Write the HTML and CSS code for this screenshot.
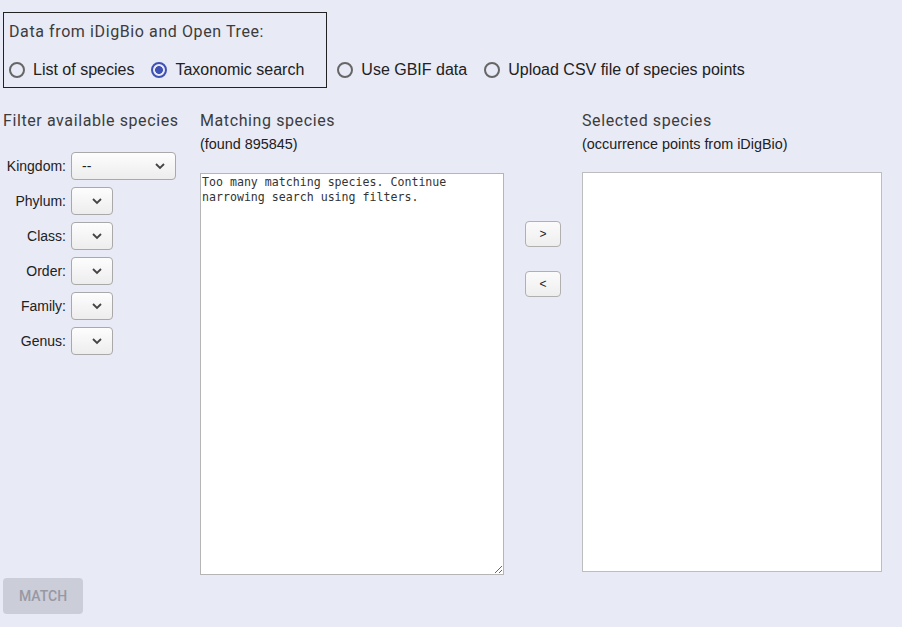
FILE: index.html
```html
<!DOCTYPE html>
<html>
<head>
<meta charset="utf-8">
<link rel="stylesheet" href="styles.css">
</head>
<body>
<div class="top">
  <div class="source-box">
    <div class="box-title">Data from iDigBio and Open Tree:</div>
    <div class="radio-row">
      <label class="radio"><input type="radio" name="src"><span>List of species</span></label>
      <label class="radio"><input type="radio" name="src" checked><span>Taxonomic search</span></label>
    </div>
  </div>
  <div class="radio-row outside">
    <label class="radio"><input type="radio" name="src"><span>Use GBIF data</span></label>
    <label class="radio"><input type="radio" name="src"><span>Upload CSV file of species points</span></label>
  </div>
</div>

<div class="main">
  <div class="col filters">
    <div class="heading">Filter available species</div>
    <div class="filter-list">
      <div class="filter-row"><span class="flabel">Kingdom:</span><span class="sel wide"><span class="sel-text">--</span><svg class="chev" width="12" height="8" viewBox="0 0 12 8"><path d="M2 2 L6 6 L10 2" fill="none" stroke="#444" stroke-width="1.8"/></svg></span></div>
      <div class="filter-row"><span class="flabel">Phylum:</span><span class="sel"><svg class="chev" width="12" height="8" viewBox="0 0 12 8"><path d="M2 2 L6 6 L10 2" fill="none" stroke="#444" stroke-width="1.8"/></svg></span></div>
      <div class="filter-row"><span class="flabel">Class:</span><span class="sel"><svg class="chev" width="12" height="8" viewBox="0 0 12 8"><path d="M2 2 L6 6 L10 2" fill="none" stroke="#444" stroke-width="1.8"/></svg></span></div>
      <div class="filter-row"><span class="flabel">Order:</span><span class="sel"><svg class="chev" width="12" height="8" viewBox="0 0 12 8"><path d="M2 2 L6 6 L10 2" fill="none" stroke="#444" stroke-width="1.8"/></svg></span></div>
      <div class="filter-row"><span class="flabel">Family:</span><span class="sel"><svg class="chev" width="12" height="8" viewBox="0 0 12 8"><path d="M2 2 L6 6 L10 2" fill="none" stroke="#444" stroke-width="1.8"/></svg></span></div>
      <div class="filter-row"><span class="flabel">Genus:</span><span class="sel"><svg class="chev" width="12" height="8" viewBox="0 0 12 8"><path d="M2 2 L6 6 L10 2" fill="none" stroke="#444" stroke-width="1.8"/></svg></span></div>
    </div>
  </div>

  <div class="col matching">
    <div class="heading">Matching species</div>
    <div class="sub">(found 895845)</div>
    <textarea class="match-area">Too many matching species. Continue narrowing search using filters.</textarea>
  </div>

  <div class="col middle">
    <button class="move">&gt;</button>
    <button class="move">&lt;</button>
  </div>

  <div class="col selected">
    <div class="heading">Selected species</div>
    <div class="sub">(occurrence points from iDigBio)</div>
    <div class="sel-area"></div>
  </div>
</div>

<button class="match-btn" disabled>MATCH</button>
</body>
</html>
```

FILE: styles.css
```css
html, body {
  margin: 0;
  padding: 0;
  background: #e8eaf6;
  width: 902px;
  height: 627px;
  overflow: hidden;
  font-family: "Liberation Sans", Arial, sans-serif;
  color: #212121;
}

.top {
  display: flex;
  align-items: flex-end;
  padding: 12px 0 0 3px;
}

.source-box {
  border: 1px solid #222;
  padding: 9px 5px 5px 5px;
}

.box-title {
  font-family: Roboto, sans-serif;
  font-size: 16px;
  letter-spacing: 0.6px;
  line-height: 20px;
  color: #3c3c3c;
  margin-bottom: 16px;
}

.radio-row {
  display: flex;
  align-items: center;
  height: 24px;
}

.outside {
  margin-left: 10px;
  margin-bottom: 6px;
}

.radio {
  display: flex;
  align-items: center;
  font-size: 16px;
  margin-right: 17px;
}

.radio input {
  appearance: none;
  -webkit-appearance: none;
  width: 16px;
  height: 16px;
  margin: 0 8px 0 0;
  border: 2px solid #666;
  border-radius: 50%;
  background: transparent;
}

.radio input:checked {
  border-color: #3f51b5;
  background: radial-gradient(circle, #3f51b5 0 3.6px, transparent 4.2px);
}

.main {
  display: flex;
  padding-left: 3px;
  margin-top: 23px;
}

.col {
  display: flex;
  flex-direction: column;
}

.filters {
  width: 197px;
}

.heading {
  font-family: Roboto, sans-serif;
  font-size: 16px;
  letter-spacing: 0.6px;
  line-height: 20px;
  color: #3c3c3c;
}

.filter-list {
  display: flex;
  flex-direction: column;
  gap: 7px;
  margin-top: 21px;
}

.filter-row {
  display: flex;
  align-items: center;
  height: 28px;
}

.flabel {
  width: 63px;
  text-align: right;
  font-size: 14px;
  margin-right: 5px;
}

.sel {
  position: relative;
  box-sizing: border-box;
  width: 42px;
  height: 28px;
  border: 1px solid #a9a9a9;
  border-radius: 4px;
  background: linear-gradient(#fdfdfd, #ededed);
  display: flex;
  align-items: center;
}

.sel.wide {
  width: 105px;
}

.sel-text {
  font-size: 14px;
  margin-left: 10px;
}

.chev {
  position: absolute;
  right: 9px;
  top: 9px;
}

.matching {
  width: 304px;
}

.sub {
  font-size: 14.4px;
  line-height: 18px;
  margin-top: 4px;
}

.match-area {
  box-sizing: border-box;
  width: 304px;
  height: 402px;
  margin: 20px 0 0 0;
  border: 1px solid #b5b5b5;
  background: #fff;
  font-family: "DejaVu Sans Mono", monospace;
  font-size: 11.6px;
  line-height: 15px;
  padding: 1px 1px;
  color: #333;
  outline: none;
}

.middle {
  width: 78px;
  align-items: center;
  padding-top: 110px;
  gap: 24px;
}

.move {
  box-sizing: border-box;
  width: 36px;
  height: 26px;
  border: 1px solid #b0b0b0;
  border-radius: 4px;
  background: linear-gradient(#fbfbfb, #eeeeee);
  font-family: "Liberation Sans", Arial, sans-serif;
  font-size: 12px;
  color: #222;
  padding: 0;
}

.selected {
  width: 300px;
}

.sel-area {
  box-sizing: border-box;
  width: 300px;
  height: 400px;
  margin-top: 19px;
  border: 1px solid #bdbdbd;
  background: #fff;
}

.match-btn {
  display: block;
  margin: 3px 0 0 3px;
  width: 80px;
  height: 36px;
  border: none;
  border-radius: 4px;
  background: #cbcdd8;
  color: #9898a3;
  font-family: Roboto, sans-serif;
  font-weight: 500;
  font-size: 14px;
  padding: 0;
}
```
